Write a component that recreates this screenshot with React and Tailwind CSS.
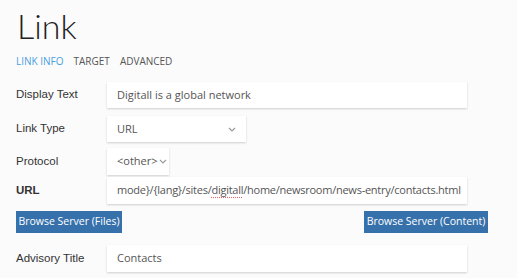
import React from "react";

const inputCls =
  "h-[26px] bg-white shadow-[0_1px_2px_rgba(0,0,0,0.18)] flex items-center pl-[10px] text-[11px] text-[#555] overflow-hidden whitespace-nowrap";

function Chevron({ className }) {
  return (
    <svg className={className} width="8" height="5" viewBox="0 0 8 5" fill="none">
      <path d="M1 1l3 3 3-3" stroke="#9a9a9a" strokeWidth="1.1" />
    </svg>
  );
}

function Row({ label, bold, children, className = "" }) {
  return (
    <div className={"flex items-center " + className}>
      <div
        className={
          "w-[91px] shrink-0 text-[11.5px] text-[#333] " + (bold ? "font-bold" : "")
        }
        style={{ fontFamily: "'Liberation Sans', Arial, sans-serif" }}
      >
        {label}
      </div>
      {children}
    </div>
  );
}

export default function App() {
  return (
    <div
      className="w-[517px] h-[278px] bg-[#fbfbfb] px-4 overflow-hidden"
      style={{ fontFamily: "'Open Sans', sans-serif" }}
    >
      <div className="pt-[4px] pl-[1px] text-[34px] font-light leading-[44px] text-[#222]" style={{ fontFamily: "Lato, 'Open Sans', sans-serif" }}>
        Link
      </div>
      <div className="mt-[6px] flex gap-[10px] text-[10px] leading-[14px] text-[#555]">
        <span className="text-[#4a9ee0]">LINK INFO</span>
        <span>TARGET</span>
        <span>ADVANCED</span>
      </div>
      <Row label="Display Text" className="mt-[14px]">
        <div className={inputCls + " w-[360px]"}>Digitall is a global network</div>
      </Row>
      <Row label="Link Type" className="mt-[8px]">
        <div className={inputCls + " w-[139px] justify-between pr-[10px]"}>
          <span>URL</span>
          <Chevron />
        </div>
      </Row>
      <Row label="Protocol" className="mt-[6px]">
        <div className={inputCls + " w-[62px] h-[27px] text-[10px]"}>
          <span>&lt;other&gt;</span>
          <Chevron className="ml-[1px]" />
        </div>
      </Row>
      <Row label="URL" bold className="mt-[2px]">
        <div className={inputCls + " w-[360px] h-[27px] text-[10.5px] tracking-[-0.25px]"}>
          mode}/{"{lang}"}/sites/
          <span className="underline decoration-dotted decoration-[#e66] underline-offset-[3px]">digitall</span>
          /home/newsroom/news-entry/contacts.html
        </div>
      </Row>
      <div className="mt-[7px] flex justify-between w-[472px] text-[10.5px] text-white whitespace-nowrap">
        <div className="h-[22px] w-[106px] bg-[#3771ab] flex items-center justify-center">Browse Server (Files)</div>
        <div className="h-[22px] w-[124px] bg-[#3771ab] flex items-center justify-center">Browse Server (Content)</div>
      </div>
      <Row label="Advisory Title" className="mt-[12px]">
        <div className={inputCls + " w-[360px] h-[27px]"}>Contacts</div>
      </Row>
    </div>
  );
}
